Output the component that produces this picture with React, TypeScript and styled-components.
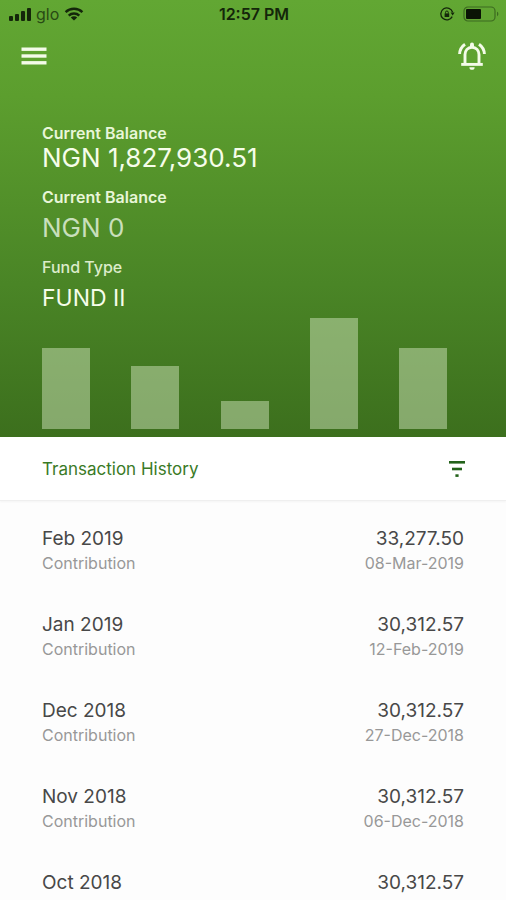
import React from "react";
import styled, { createGlobalStyle } from "styled-components";

const GlobalStyle = createGlobalStyle`
  * { box-sizing: border-box; }
  body {
    margin: 0;
    background: #fdfdfd;
    font-family: Inter, "Liberation Sans", sans-serif;
  }
`;

const Page = styled.main`
  width: 100%;
  min-height: 100vh;
`;

const Hero = styled.header`
  display: flex;
  flex-direction: column;
  padding-bottom: 8px;
  color: #f4fbe9;
  background: linear-gradient(180deg, #62a733 0%, #5c9e2e 22%, #4a8526 65%, #3c6f1d 100%);
`;

const StatusBar = styled.div`
  display: grid;
  grid-template-columns: 1fr auto 1fr;
  align-items: center;
  height: 28px;
  padding: 0 6px 0 8px;
  color: #14260a;
`;

const StatusGroup = styled.div<{ $end?: boolean }>`
  display: flex;
  align-items: center;
  justify-content: ${(p) => (p.$end ? "flex-end" : "flex-start")};
  gap: ${(p) => (p.$end ? 8 : 5)}px;
`;

const Carrier = styled.span`
  font-size: 16px;
  line-height: 20px;
  color: #284a14;
`;

const Clock = styled.time`
  font-size: 16px;
  line-height: 20px;
  font-weight: 600;
`;

const NavBar = styled.nav`
  display: flex;
  align-items: center;
  justify-content: space-between;
  height: 56px;
  padding: 0 18px;
`;

const IconButton = styled.button`
  display: flex;
  align-items: center;
  justify-content: center;
  width: 32px;
  height: 32px;
  padding: 0;
  border: 0;
  background: none;
  color: inherit;
  cursor: pointer;
`;

const Summary = styled.dl`
  display: flex;
  flex-direction: column;
  margin: 0;
  padding: 40px 42px 0;
`;

const Label = styled.dt<{ $light?: boolean }>`
  font-size: 16px;
  line-height: 18px;
  font-weight: ${(p) => (p.$light ? 500 : 600)};
  color: ${(p) => (p.$light ? "#dcecca" : "#e8f6d8")};
`;

const Value = styled.dd<{ $tone: "strong" | "muted" | "fund" }>`
  margin: 0;
  padding: ${(p) => (p.$tone === "strong" ? "0 0 14px" : p.$tone === "muted" ? "6px 0 14px" : "6px 0 0")};
  font-size: ${(p) => (p.$tone === "fund" ? 23 : 26)}px;
  line-height: 32px;
  color: ${(p) => (p.$tone === "muted" ? "#c9dfbc" : "#f6fdea")};
`;

const Chart = styled.div`
  display: flex;
  align-items: flex-end;
  justify-content: space-between;
  height: 111px;
  margin: 4px 59px 0 42px;
`;

const Bar = styled.div`
  width: 48px;
  background: rgba(205, 225, 185, 0.5);
`;

const HistoryBar = styled.div`
  display: flex;
  align-items: center;
  justify-content: space-between;
  height: 64px;
  padding: 0 33px 0 42px;
  background: #ffffff;
  border-bottom: 1px solid #efefef;
  box-shadow: 0 1px 2px rgba(0, 0, 0, 0.04);
  color: #3a7a26;
`;

const HistoryTitle = styled.h2`
  margin: 0;
  font-size: 17px;
  line-height: 24px;
  font-weight: 400;
`;

const List = styled.ul`
  margin: 0;
  padding: 25px 42px 0;
  list-style: none;
  display: flex;
  flex-direction: column;
  gap: 38px;
`;

const Row = styled.li`
  display: flex;
  justify-content: space-between;
`;

const Column = styled.div<{ $end?: boolean }>`
  display: flex;
  flex-direction: column;
  text-align: ${(p) => (p.$end ? "right" : "left")};
`;

const Primary = styled.span`
  font-size: 19px;
  line-height: 26px;
  color: #484848;
`;

const Secondary = styled.span`
  font-size: 16px;
  line-height: 22px;
  color: #989898;
`;

const bars = [81, 63, 28, 111, 81];

const transactions = [
  { month: "Feb 2019", amount: "33,277.50", kind: "Contribution", date: "08-Mar-2019" },
  { month: "Jan 2019", amount: "30,312.57", kind: "Contribution", date: "12-Feb-2019" },
  { month: "Dec 2018", amount: "30,312.57", kind: "Contribution", date: "27-Dec-2018" },
  { month: "Nov 2018", amount: "30,312.57", kind: "Contribution", date: "06-Dec-2018" },
  { month: "Oct 2018", amount: "30,312.57" },
];

const SignalIcon = () => (
  <svg width="23" height="14" viewBox="0 0 23 14" fill="currentColor" aria-hidden="true">
    <rect x="1" y="9" width="4" height="5" rx="1" />
    <rect x="7" y="7" width="4" height="7" rx="1" />
    <rect x="13" y="4" width="4" height="10" rx="1" />
    <rect x="19" y="1" width="4" height="13" rx="1" />
  </svg>
);

const WifiIcon = () => (
  <svg width="20" height="14" viewBox="0 0 20 14" aria-hidden="true">
    <g fill="none" stroke="currentColor" strokeWidth="2.4">
      <path d="M1.6 5.2a12 12 0 0 1 16.8 0" />
      <path d="M4.7 8.6a7.6 7.6 0 0 1 10.6 0" />
    </g>
    <path d="M10 13.6 6.8 10.5a4.6 4.6 0 0 1 6.4 0z" fill="currentColor" />
  </svg>
);

const RotationLockIcon = () => (
  <svg width="15" height="14" viewBox="0 0 15 14" fill="none" stroke="currentColor" aria-hidden="true">
    <path d="M12.6 5.2A6 6 0 1 0 12.2 9.6" strokeWidth="1.3" />
    <path d="M10.6 5.6h4l-2 3z" fill="currentColor" stroke="none" />
    <rect x="4.6" y="6.4" width="4.6" height="3.6" fill="currentColor" stroke="none" />
    <path d="M5.5 6.6V5.4a1.4 1.4 0 0 1 2.8 0v1.2" strokeWidth="1" />
  </svg>
);

const BatteryIcon = () => (
  <svg width="37" height="16" viewBox="0 0 37 16" aria-hidden="true">
    <rect x="1" y="1" width="31" height="14" rx="4" fill="none" stroke="#3c6a20" strokeWidth="1.2" />
    <rect x="3" y="3" width="15" height="10" rx="1" fill="#0a1405" />
    <path d="M34 5.8c1.8.6 1.8 3.8 0 4.4z" fill="#3c6a20" />
  </svg>
);

const MenuIcon = () => (
  <svg width="26" height="18" viewBox="0 0 26 18" fill="currentColor" aria-hidden="true">
    <rect x="0.5" y="0.5" width="25" height="3.4" />
    <rect x="0.5" y="7.3" width="25" height="3.4" />
    <rect x="0.5" y="14.1" width="25" height="3.4" />
  </svg>
);

const BellIcon = () => (
  <svg width="28" height="28" viewBox="0 0 28 28" fill="none" stroke="currentColor" aria-hidden="true">
    <path d="M7 22V12.5C7 8.6 9.8 5.2 14 5.2s7 3.4 7 7.3V22" strokeWidth="2.9" />
    <path d="M3.2 22.4h21.6" strokeWidth="2.9" />
    <path d="M12 5V2.6a2 2 0 0 1 4 0V5z" fill="currentColor" stroke="none" />
    <path d="M11.4 25.2h5.2a2.6 2.6 0 0 1-5.2 0z" fill="currentColor" stroke="none" />
    <path d="M1.6 12C1.8 7.8 3.8 4.4 7 2.2M26.4 12c-.2-4.2-2.2-7.6-5.4-9.8" strokeWidth="2.9" />
  </svg>
);

const FilterIcon = () => (
  <svg width="18" height="18" viewBox="0 0 18 18" fill="#23621a" aria-hidden="true">
    <rect x="1" y="1" width="16" height="2.6" />
    <rect x="4" y="7.7" width="10" height="2.6" />
    <rect x="7.4" y="14.3" width="3.2" height="2.6" />
  </svg>
);

export default function App() {
  return (
    <Page>
      <GlobalStyle />
      <Hero>
        <StatusBar>
          <StatusGroup>
            <SignalIcon />
            <Carrier>glo</Carrier>
            <WifiIcon />
          </StatusGroup>
          <Clock>12:57 PM</Clock>
          <StatusGroup $end>
            <RotationLockIcon />
            <BatteryIcon />
          </StatusGroup>
        </StatusBar>
        <NavBar>
          <IconButton type="button" aria-label="Menu">
            <MenuIcon />
          </IconButton>
          <IconButton type="button" aria-label="Notifications">
            <BellIcon />
          </IconButton>
        </NavBar>
        <Summary>
          <Label>Current Balance</Label>
          <Value $tone="strong">NGN 1,827,930.51</Value>
          <Label>Current Balance</Label>
          <Value $tone="muted">NGN 0</Value>
          <Label $light>Fund Type</Label>
          <Value $tone="fund">FUND II</Value>
        </Summary>
        <Chart role="img" aria-label="Recent contributions">
          {bars.map((height, i) => (
            <Bar key={i} style={{ height }} />
          ))}
        </Chart>
      </Hero>
      <HistoryBar>
        <HistoryTitle>Transaction History</HistoryTitle>
        <IconButton type="button" aria-label="Filter">
          <FilterIcon />
        </IconButton>
      </HistoryBar>
      <List>
        {transactions.map((t) => (
          <Row key={t.month}>
            <Column>
              <Primary>{t.month}</Primary>
              {t.kind && <Secondary>{t.kind}</Secondary>}
            </Column>
            <Column $end>
              <Primary>{t.amount}</Primary>
              {t.date && <Secondary>{t.date}</Secondary>}
            </Column>
          </Row>
        ))}
      </List>
    </Page>
  );
}
